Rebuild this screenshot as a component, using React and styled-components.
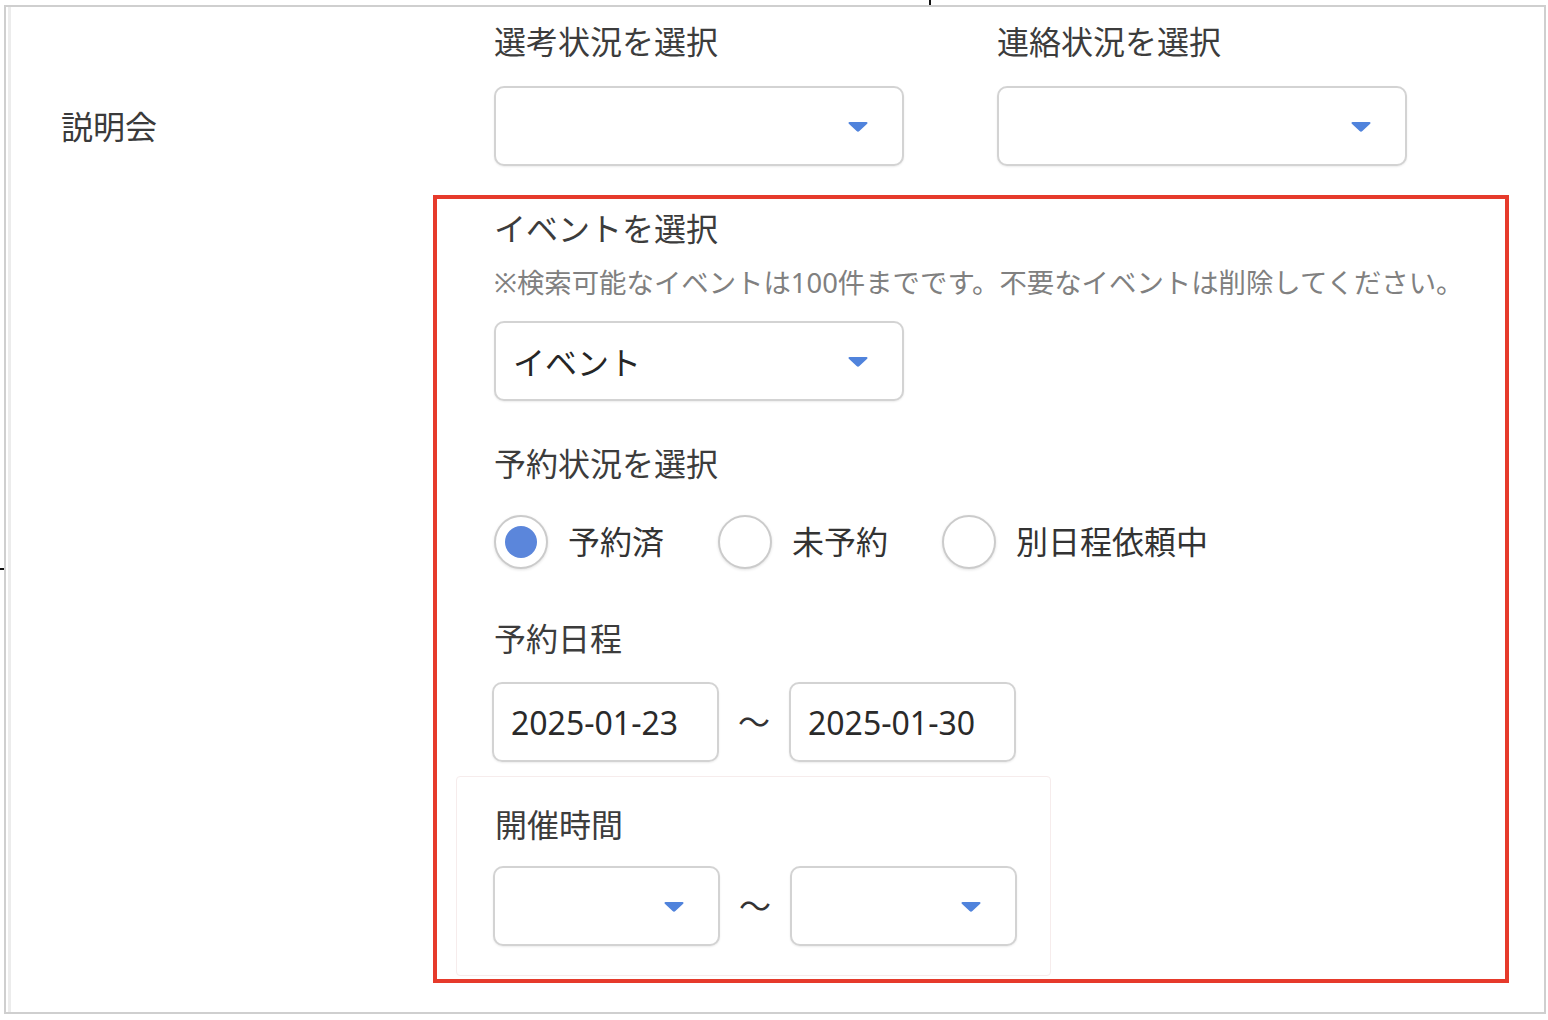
import styled, { createGlobalStyle } from "styled-components";

const GlobalStyle = createGlobalStyle`
  html, body {
    margin: 0;
    padding: 0;
    background: #fff;
  }
  body {
    font-family: "Noto Sans", "Noto Sans CJK JP", sans-serif;
    color: #3a3a3a;
  }
`;

const Page = styled.div`
  position: relative;
  width: 1548px;
  height: 1020px;
  padding: 5px 0 0 4px;
  box-sizing: border-box;
`;

const Mark = styled.span`
  position: absolute;
  background: #111;
  ${({ $vertical }) =>
    $vertical
      ? "left: 929px; top: 0; width: 2px; height: 5px;"
      : "left: 0; top: 568px; width: 4px; height: 2px;"}
`;

const Frame = styled.div`
  width: 1542px;
  height: 1009px;
  box-sizing: border-box;
  border: 2px solid #cfcfcf;
  box-shadow: inset 2px 0 0 #fff, inset 5px 0 0 #ececec;
  display: flex;
`;

const SectionLabel = styled.div`
  width: 427px;
  box-sizing: border-box;
  padding: 96px 0 0 55px;
  font-size: 32px;
  line-height: 48px;
  color: #3a3a3a;
`;

const Body = styled.div`
  display: flex;
  flex-direction: column;
  padding-top: 11px;
`;

const TopRow = styled.div`
  display: flex;
  gap: 93px;
  padding-left: 61px;
`;

const Field = styled.div`
  display: flex;
  flex-direction: column;
  gap: ${({ $gap }) => $gap ?? 20}px;
`;

const Label = styled.div`
  font-size: 32px;
  line-height: 48px;
  color: #3c3c3c;
`;

const Note = styled.div`
  font-size: 27.4px;
  line-height: 40px;
  color: #808080;
  margin-top: 10px;
  white-space: nowrap;
`;

const SelectBox = styled.div`
  width: ${({ $width }) => $width}px;
  height: 80px;
  box-sizing: border-box;
  border: 2px solid #d3d3d3;
  border-radius: 10px;
  box-shadow: 0 1px 2px rgba(0, 0, 0, 0.08);
  background: #fff;
  display: flex;
  align-items: center;
  justify-content: space-between;
  padding: 0 34px 0 17px;
  font-size: 32px;
  color: #262626;
`;

const Arrow = styled.svg`
  width: 20px;
  height: 11px;
  flex: none;
`;

const Highlight = styled.div`
  margin-top: 29px;
  width: 1076px;
  height: 788px;
  box-sizing: border-box;
  border: 4px solid #e63a2b;
  padding: 6px 0 0 57px;
  display: flex;
  flex-direction: column;
`;

const RadioRow = styled.div`
  display: flex;
  align-items: center;
  gap: 54px;
  margin-top: 27px;
`;

const RadioItem = styled.label`
  display: flex;
  align-items: center;
  gap: 20px;
  font-size: 32px;
  line-height: 48px;
  color: #333;
`;

const RadioCircle = styled.span`
  width: 54px;
  height: 54px;
  box-sizing: border-box;
  border-radius: 50%;
  border: 2px solid #cbcbcb;
  box-shadow: 0 1px 3px rgba(0, 0, 0, 0.12);
  background: #fff;
  display: flex;
  align-items: center;
  justify-content: center;

  &::after {
    content: "";
    width: 32px;
    height: 32px;
    border-radius: 50%;
    background: ${({ $checked }) => ($checked ? "#5b86db" : "transparent")};
  }
`;

const RangeRow = styled.div`
  display: flex;
  align-items: center;
  gap: 19px;
  margin-left: -2px;
`;

const Tilde = styled.span`
  width: 32px;
  font-size: 32px;
  line-height: 48px;
  color: #333;
  text-align: center;
`;

const DateInput = styled.div`
  width: 227px;
  height: 80px;
  box-sizing: border-box;
  border: 2px solid #d3d3d3;
  border-radius: 10px;
  box-shadow: 0 1px 2px rgba(0, 0, 0, 0.08);
  display: flex;
  align-items: center;
  padding-left: 17px;
  font-size: 32px;
  color: #2a2a2a;
`;

const TimeGroup = styled.div`
  margin: 14px 0 0 -38px;
  width: 595px;
  height: 200px;
  box-sizing: border-box;
  border: 1px solid #f6ecec;
  border-radius: 4px;
  padding: 24px 0 0 38px;
  display: flex;
  flex-direction: column;
  gap: 17px;
`;

const DropArrow = () => (
  <Arrow viewBox="0 0 20 11">
    <path d="M1.5 1h17a1 1 0 0 1 .7 1.7l-7.8 7.3a2 2 0 0 1-2.8 0L.8 2.7A1 1 0 0 1 1.5 1z" fill="#5083dc" />
  </Arrow>
);

const Select = ({ width, value }) => (
  <SelectBox $width={width}>
    <span>{value}</span>
    <DropArrow />
  </SelectBox>
);

const radios = [
  { label: "予約済", checked: true },
  { label: "未予約", checked: false },
  { label: "別日程依頼中", checked: false },
];

export default function App() {
  return (
    <>
      <GlobalStyle />
      <Page>
        <Mark $vertical />
        <Mark />
        <Frame>
          <SectionLabel>説明会</SectionLabel>
          <Body>
            <TopRow>
              <Field>
                <Label>選考状況を選択</Label>
                <Select width={410} />
              </Field>
              <Field>
                <Label>連絡状況を選択</Label>
                <Select width={410} />
              </Field>
            </TopRow>

            <Highlight>
              <Label>イベントを選択</Label>
              <Note>※検索可能なイベントは100件までです。不要なイベントは削除してください。</Note>
              <Field style={{ marginTop: 18 }}>
                <Select width={410} value="イベント" />
              </Field>

              <Field style={{ marginTop: 39 }}>
                <Label>予約状況を選択</Label>
              </Field>
              <RadioRow>
                {radios.map((r) => (
                  <RadioItem key={r.label}>
                    <RadioCircle $checked={r.checked} />
                    {r.label}
                  </RadioItem>
                ))}
              </RadioRow>

              <Field $gap={19} style={{ marginTop: 46 }}>
                <Label>予約日程</Label>
                <RangeRow>
                  <DateInput>2025-01-23</DateInput>
                  <Tilde>〜</Tilde>
                  <DateInput>2025-01-30</DateInput>
                </RangeRow>
              </Field>

              <TimeGroup>
                <Label>開催時間</Label>
                <RangeRow>
                  <Select width={227} />
                  <Tilde>〜</Tilde>
                  <Select width={227} />
                </RangeRow>
              </TimeGroup>
            </Highlight>
          </Body>
        </Frame>
      </Page>
    </>
  );
}
